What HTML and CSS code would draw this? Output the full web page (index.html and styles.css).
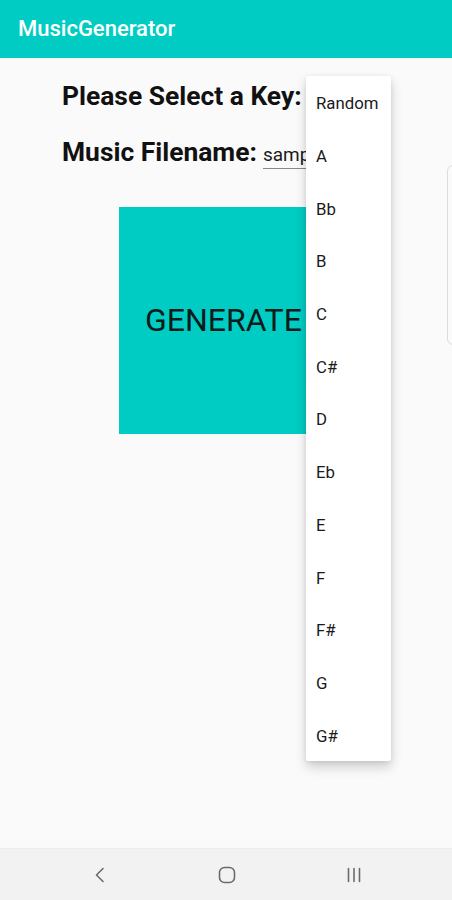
FILE: index.html
```html
<!DOCTYPE html>
<html>
<head>
<meta charset="utf-8">
<link rel="stylesheet" href="styles.css">
</head>
<body>
<div class="screen">
  <header class="appbar">MusicGenerator</header>
  <main class="content">
    <div class="row row-key">
      <span class="label">Please Select a Key:</span>
    </div>
    <div class="row row-file">
      <span class="label">Music Filename:</span>
      <span class="input">sample</span>
    </div>
    <div class="btn-wrap">
      <div class="generate">GENERATE</div>
    </div>
  </main>
  <div class="edge-handle"></div>
  <ul class="menu">
    <li>Random</li>
    <li>A</li>
    <li>Bb</li>
    <li>B</li>
    <li>C</li>
    <li>C#</li>
    <li>D</li>
    <li>Eb</li>
    <li>E</li>
    <li>F</li>
    <li>F#</li>
    <li>G</li>
    <li>G#</li>
  </ul>
  <nav class="navbar">
    <svg class="nav-icon" width="20" height="20" viewBox="0 0 20 20"><path d="M13 3.5 L6.5 10 L13 16.5" fill="none" stroke="#6b6b6b" stroke-width="1.6" stroke-linecap="round" stroke-linejoin="round"/></svg>
    <svg class="nav-icon" width="20" height="20" viewBox="0 0 20 20"><rect x="2.5" y="2.5" width="15" height="15" rx="5" fill="none" stroke="#6b6b6b" stroke-width="1.6"/></svg>
    <svg class="nav-icon" width="20" height="20" viewBox="0 0 20 20"><path d="M4.5 3.5 V16.5 M10 3.5 V16.5 M15.5 3.5 V16.5" fill="none" stroke="#6b6b6b" stroke-width="1.6" stroke-linecap="round"/></svg>
  </nav>
</div>
</body>
</html>
```

FILE: styles.css
```css
* { box-sizing: border-box; }
html, body { margin: 0; padding: 0; }
body {
  font-family: Roboto, "Liberation Sans", sans-serif;
  background: #fafafa;
}
.screen {
  position: relative;
  width: 452px;
  height: 900px;
  overflow: hidden;
  display: flex;
  flex-direction: column;
  background: #fafafa;
}
.appbar {
  height: 58px;
  flex: none;
  background: #00ccc3;
  color: #ffffff;
  font-size: 22px;
  font-weight: 500;
  padding-left: 18px;
  padding-bottom: 2px;
  display: flex;
  align-items: center;
}
.content {
  flex: 1;
  padding-left: 62px;
  padding-top: 20px;
}
.row {
  display: flex;
  align-items: center;
  height: 36px;
}
.row-file { margin-top: 20px; }
.label {
  font-size: 26.4px;
  font-weight: 700;
  color: #111111;
}
.input {
  margin-left: 6px;
  font-size: 19px;
  color: #1a1a1a;
  width: 60px;
  padding-bottom: 2px;
  border-bottom: 1.5px solid #888888;
  margin-top: 8px;
  overflow: hidden;
  white-space: nowrap;
}
.btn-wrap {
  padding-left: 57px;
  padding-top: 37px;
}
.generate {
  width: 227px;
  height: 227px;
  background: #00ccc3;
  color: #0d1b1b;
  font-size: 32px;
  display: flex;
  align-items: center;
  padding-left: 26px;
  padding-bottom: 2px;
}
.menu {
  position: absolute;
  left: 306px;
  top: 76px;
  width: 85px;
  margin: 0;
  padding: 0;
  list-style: none;
  background: #ffffff;
  box-shadow: 0 6px 12px rgba(0,0,0,0.18), 0 1px 4px rgba(0,0,0,0.08);
  border-radius: 2px;
}
.menu li {
  height: 52.7px;
  display: flex;
  align-items: center;
  padding-left: 10px;
  padding-top: 2px;
  font-size: 16.8px;
  color: #1a1a1a;
}
.edge-handle {
  position: absolute;
  left: 447px;
  top: 165px;
  width: 20px;
  height: 180px;
  border: 1px solid #dcdcdc;
  border-radius: 6px;
}
.navbar {
  height: 52px;
  flex: none;
  background: #f2f2f2;
  border-top: 1px solid #ececec;
  display: flex;
  align-items: center;
  justify-content: space-between;
  padding: 0 88px 0 90px;
}
.nav-icon { display: block; }
```
